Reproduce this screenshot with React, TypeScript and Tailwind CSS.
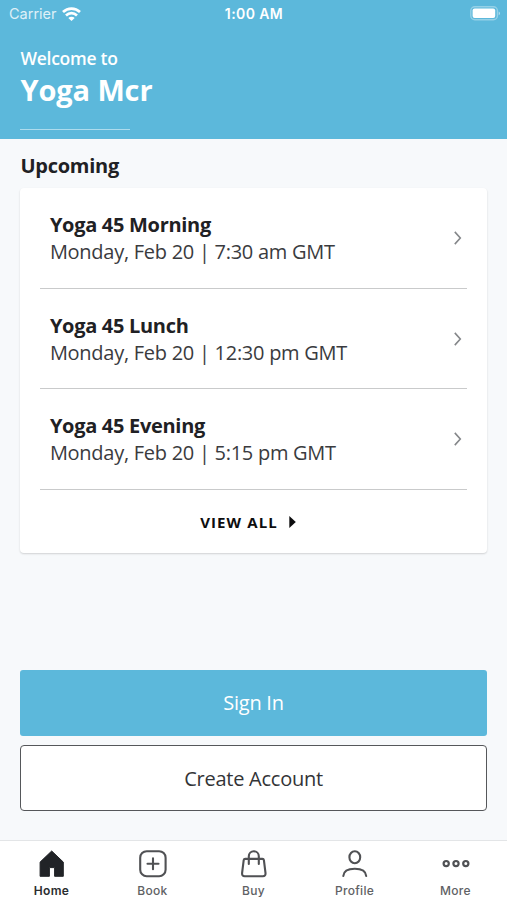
import React, { FC, ReactNode } from "react";
import cx from "clsx";

interface ClassItem {
  name: string;
  time: string;
}

interface TabItem {
  label: string;
  icon: ReactNode;
  active?: boolean;
}

const classes: ClassItem[] = [
  { name: "Yoga 45 Morning", time: "Monday, Feb 20 | 7:30 am GMT" },
  { name: "Yoga 45 Lunch", time: "Monday, Feb 20 | 12:30 pm GMT" },
  { name: "Yoga 45 Evening", time: "Monday, Feb 20 | 5:15 pm GMT" },
];

const HomeIcon = () => (
  <svg width="28" height="28" viewBox="0 0 28 28" fill="#212327">
    <path
      d="M13.7 1 25.3 12.1V26.3H16.6V17.6H11.4V26.3H2.1V12.1Z"
      stroke="#212327"
      strokeWidth="1"
      strokeLinejoin="round"
    />
  </svg>
);

const BookIcon = () => (
  <svg width="28" height="28" viewBox="0 0 28 28" fill="none" stroke="#505154" strokeWidth="2.1">
    <rect x="1.2" y="1.2" width="25.4" height="25" rx="6.5" />
    <path d="M14 8.4V19.2M8.5 13.8H19.5" strokeLinecap="round" />
  </svg>
);

const BuyIcon = () => (
  <svg
    width="28"
    height="28"
    viewBox="0 0 28 28"
    fill="none"
    stroke="#505154"
    strokeWidth="2.1"
    strokeLinecap="round"
    strokeLinejoin="round"
  >
    <path d="M5.2 8.9H22.4Q23.7 8.9 23.9 10.1L25.5 23Q25.8 26.2 22.9 26.2H4.7Q1.8 26.2 2.1 23L3.7 10.1Q3.9 8.9 5.2 8.9Z" />
    <path d="M8.8 14V6.2C8.8 3.3 11 1.3 13.8 1.3S18.8 3.3 18.8 6.2V14" />
  </svg>
);

const ProfileIcon = () => (
  <svg
    width="28"
    height="28"
    viewBox="0 0 28 28"
    fill="none"
    stroke="#505154"
    strokeWidth="2.1"
    strokeLinecap="round"
  >
    <ellipse cx="13.8" cy="7.2" rx="5.4" ry="6" />
    <path d="M2.3 26C2.7 20.8 7 18.8 13.8 18.8S24.8 20.8 25.2 26" />
  </svg>
);

const MoreIcon = () => (
  <svg width="28" height="28" viewBox="0 0 28 28" fill="none" stroke="#505154" strokeWidth="2.2">
    <circle cx="4.2" cy="13.6" r="2.6" />
    <circle cx="14" cy="13.6" r="2.6" />
    <circle cx="23.8" cy="13.6" r="2.6" />
  </svg>
);

const tabs: TabItem[] = [
  { label: "Home", icon: <HomeIcon />, active: true },
  { label: "Book", icon: <BookIcon /> },
  { label: "Buy", icon: <BuyIcon /> },
  { label: "Profile", icon: <ProfileIcon /> },
  { label: "More", icon: <MoreIcon /> },
];

const StatusBar = () => (
  <div className="grid grid-cols-3 items-center h-[27px] pl-[7px] pr-[6px] font-['Inter',sans-serif] text-white">
    <div className="flex items-center gap-[5px] pl-[2px]">
      <span className="pt-px text-[14.5px] leading-none opacity-80">Carrier</span>
      <svg width="19" height="14" viewBox="0 0 19 14" fill="none" stroke="white" strokeWidth="2.7">
        <path d="M1 5C5.8.4 13.2.4 18 5" />
        <path d="M4 8.4C7.2 5.4 11.8 5.4 15 8.4" />
        <path d="M9.5 13.9 6.3 10.9C8.2 9.2 10.8 9.2 12.7 10.9Z" fill="white" stroke="none" />
      </svg>
    </div>
    <span className="text-center text-[14px] font-semibold leading-none tracking-[0.4px]">
      1:00 AM
    </span>
    <svg className="justify-self-end" width="31" height="15" viewBox="0 0 31 15">
      <rect x=".8" y=".8" width="26.6" height="13" rx="4" fill="none" stroke="white" strokeOpacity=".35" strokeWidth="1.4" />
      <rect x="2.6" y="2.6" width="22.6" height="9.4" rx="2" fill="white" />
      <path d="M28.7 5.4V9.2C30.5 8.5 30.5 6.1 28.7 5.4Z" fill="white" fillOpacity=".5" />
    </svg>
  </div>
);

const ClassRow: FC<{ item: ClassItem }> = ({ item }) => (
  <div className="flex items-center justify-between h-[100.6px] border-b border-[#c9cacb] pl-[9.5px] pr-[5px]">
    <div className="pt-[0.4px] text-[20px] leading-[27px]">
      <h4 className="font-bold tracking-[-0.3px] text-[#1f2124]">{item.name}</h4>
      <p className="tracking-[-0.27px] text-[#3a3b3e]">{item.time}</p>
    </div>
    <svg className="mt-px" width="9" height="14" viewBox="0 0 9 14" fill="none" stroke="#85878a" strokeWidth="1.6">
      <path d="M1.8.9 7.3 7 1.8 13.1" />
    </svg>
  </div>
);

const TabBar = () => (
  <nav className="grid grid-cols-5 h-[60px] border-t border-[#e3e5e7] bg-white px-[1px] font-['Inter',sans-serif]">
    {tabs.map((tab) => (
      <div key={tab.label} className="flex flex-col items-center pt-[9px]">
        {tab.icon}
        <span
          className={cx(
            "mt-[5px] text-[12px] leading-[15px] tracking-[0.3px]",
            tab.active ? "font-semibold text-[#2b2d30]" : "font-medium text-[#606164]"
          )}
        >
          {tab.label}
        </span>
      </div>
    ))}
  </nav>
);

export default function App() {
  return (
    <div className="flex flex-col w-[507px] h-[900px] overflow-hidden bg-[#f7f9fb] font-['Open_Sans',sans-serif]">
      <header className="h-[139px] bg-[#5cb8db] text-white">
        <StatusBar />
        <div className="px-[20.4px] pt-[19px]">
          <p className="text-[17.5px] font-semibold leading-6 tracking-[-0.25px]">Welcome to</p>
          <h1 className="text-[29px] font-bold leading-10 tracking-[-0.1px]">Yoga Mcr</h1>
          <div className="mt-[18.6px] w-[110px] h-px bg-white/50" />
        </div>
      </header>

      <main className="flex flex-col flex-1 px-[20.4px] pt-[13px]">
        <h2 className="text-[20px] font-bold leading-[27px] tracking-[-0.25px] text-[#1f2124]">
          Upcoming
        </h2>
        <section className="mt-[9px] px-[20px] h-[365px] rounded bg-white shadow-[0_1px_2px_rgba(0,0,0,0.16)]">
          {classes.map((item) => (
            <ClassRow key={item.name} item={item} />
          ))}
          <button className="flex items-center justify-center w-full h-[64px] pr-[11px] text-[15px] font-bold tracking-[1.1px] text-[#0d0d0e]">
            VIEW ALL
            <svg className="ml-[11px]" width="7" height="12" viewBox="0 0 7 12">
              <path d="M.3 0 6.8 6 .3 12Z" fill="#0d0d0e" />
            </svg>
          </button>
        </section>

        <div className="flex flex-col gap-[9.5px] mt-auto mb-[29px] text-[20px] tracking-[-0.25px]">
          <button className="h-[66px] rounded-[3px] bg-[#5cb8db] pt-px text-white">Sign In</button>
          <button className="h-[66px] rounded-[4px] border-[1.5px] border-[#55575a] bg-white pt-px text-[#333437]">
            Create Account
          </button>
        </div>
      </main>

      <TabBar />
    </div>
  );
}
